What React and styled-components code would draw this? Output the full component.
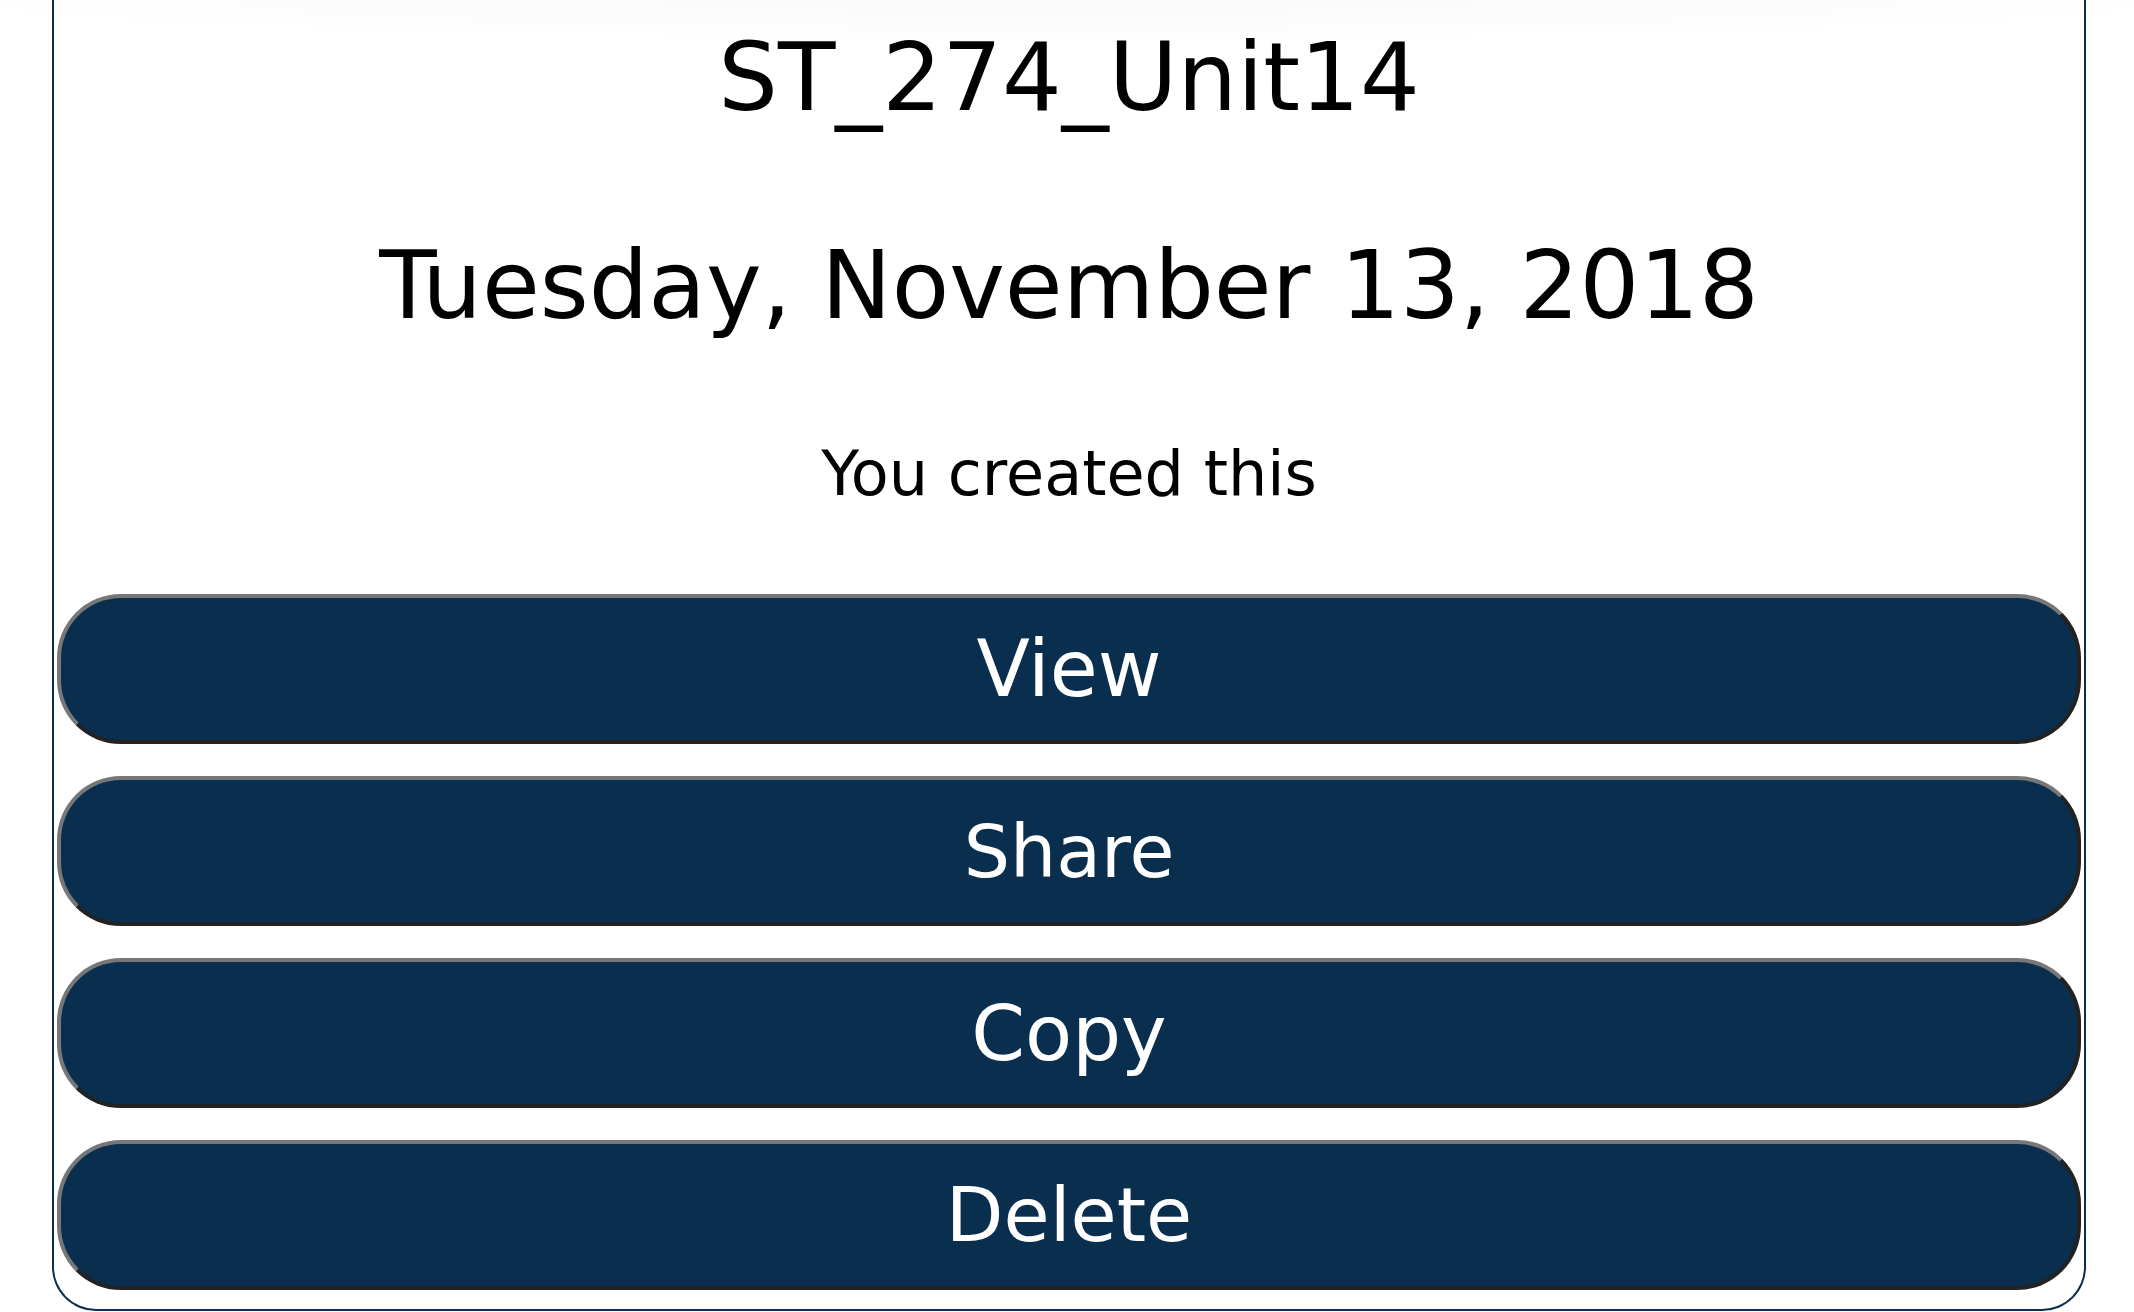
import React from 'react';
import styled, { createGlobalStyle } from 'styled-components';

const GlobalStyle = createGlobalStyle`
  html, body {
    margin: 0;
    padding: 0;
    background: #ffffff;
  }
  body {
    font-family: "DejaVu Sans", "Liberation Sans", sans-serif;
  }
`;

// page with the faint shadow along the top edge
const Page = styled.div`
  width: 2134px;
  height: 1312px;
  overflow: hidden;
  background: radial-gradient(ellipse 1150px 40px at 50% 0, #fafafa 0%, #fcfcfc 60%, #ffffff 100%);
`;

const Panel = styled.div`
  box-sizing: border-box;
  width: 2034px;
  height: 1311px;
  margin-left: 52px;
  padding: 24px 1px 0;
  border: 2px solid #0b2e4e;
  border-top: none;
  border-radius: 0 0 44px 44px;
  display: flex;
  flex-direction: column;
  align-items: center;
  color: #000000;
`;

const Title = styled.h1`
  margin: 0;
  font-size: 94px;
  font-weight: normal;
  line-height: 108px;
`;

const DateLine = styled.h2`
  margin: 100px 0 0;
  font-size: 94px;
  font-weight: normal;
  line-height: 108px;
`;

const Owner = styled.p`
  margin: 98px 0 0;
  font-size: 62px;
  line-height: 72px;
`;

const Actions = styled.div`
  align-self: stretch;
  margin-top: 84px;
  display: flex;
  flex-direction: column;
  gap: 32px;
`;

// rounded action button with the light top / dark bottom bevel
const ActionButton = styled.button`
  box-sizing: border-box;
  height: 150px;
  margin: 0 2px;
  border: 4px solid;
  border-color: #777777 #222222 #222222 #777777;
  border-radius: 64px;
  background: #0a2e4d;
  color: #ffffff;
  font-family: "DejaVu Sans", "Liberation Sans", sans-serif;
  font-size: ${(props) => props.$size || 76}px;
  line-height: 1;
  padding: 0;
  cursor: pointer;
`;

const actions = [
  { label: 'View', size: 78 },
  { label: 'Share', size: 73 },
  { label: 'Copy', size: 77 },
  { label: 'Delete', size: 75 },
];

export default function App() {
  return (
    <>
      <GlobalStyle />
      <Page>
        <Panel>
          <Title>ST_274_Unit14</Title>
          <DateLine>Tuesday, November 13, 2018</DateLine>
          <Owner>You created this</Owner>
          <Actions>
            {actions.map((a) => (
              <ActionButton key={a.label} $size={a.size}>
                {a.label}
              </ActionButton>
            ))}
          </Actions>
        </Panel>
      </Page>
    </>
  );
}
